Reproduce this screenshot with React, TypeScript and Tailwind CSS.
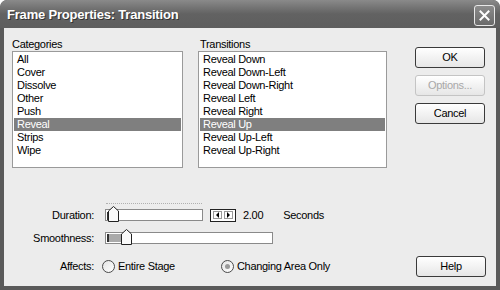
import React from "react";

const categories = ["All", "Cover", "Dissolve", "Other", "Push", "Reveal", "Strips", "Wipe"];
const transitions = [
  "Reveal Down",
  "Reveal Down-Left",
  "Reveal Down-Right",
  "Reveal Left",
  "Reveal Right",
  "Reveal Up",
  "Reveal Up-Left",
  "Reveal Up-Right",
];

const ListBox = ({ items, selected, width }: { items: string[]; selected: string; width: string }) => (
  <div className={`${width} h-[117px] border border-[#9a9a9a] bg-white pt-px`}>
    {items.map((item) => (
      <div
        key={item}
        className={`h-[13px] leading-[13px] pl-[3px] mx-px ${
          item === selected ? "bg-[#7f7f7f] text-white" : "text-black"
        }`}
      >
        {item}
      </div>
    ))}
  </div>
);

const Button = ({ label, disabled }: { label: string; disabled?: boolean }) => (
  <div
    className={`w-[70px] h-[21px] rounded-[3px] border flex items-center justify-center bg-gradient-to-b from-white to-[#e6e6e6] ${
      disabled ? "border-[#c4c4c4] text-[#a8a8a8]" : "border-[#3a3a3a] text-black"
    }`}
  >
    {label}
  </div>
);

const Thumb = () => (
  <svg width="11" height="16" viewBox="0 0 11 16" className="absolute top-[-4px]">
    <path d="M0.5 15.5 V5 L5.5 0.5 L10.5 5 V15.5 Z" fill="#fafafa" stroke="#222" />
  </svg>
);

const Radio = ({ checked }: { checked?: boolean }) => (
  <div className="w-[13px] h-[13px] rounded-full border border-[#4a4a4a] bg-gradient-to-br from-[#e4e4e4] to-white flex items-center justify-center">
    {checked && <div className="w-[5px] h-[5px] rounded-full bg-[#9a9a9a]" />}
  </div>
);

export default function App() {
  return (
    <div className="w-[500px] h-[290px] bg-[#5a5a5a] rounded-t-[7px] flex flex-col font-['Liberation_Sans',Arial,sans-serif] text-[11px] tracking-[-0.3px] text-black overflow-hidden">
      {/* title bar */}
      <div className="h-[28px] flex items-center justify-between pl-[7px] pr-[5px] bg-gradient-to-b from-[#8a8a8a] via-[#626262] to-[#5e5e5e] rounded-t-[7px]">
        <span className="text-white font-bold text-[13px] tracking-[-0.2px] [text-shadow:1px_1px_0_#333] pt-[1px]">
          Frame Properties: Transition
        </span>
        <div className="w-[21px] h-[21px] rounded-[3px] border border-[#e8e8e8] bg-gradient-to-b from-[#8c8c8c] to-[#6a6a6a] flex items-center justify-center mt-[2px]">
          <svg width="11" height="11" viewBox="0 0 11 11">
            <path d="M1.5 1.5 L9.5 9.5 M9.5 1.5 L1.5 9.5" stroke="white" strokeWidth="2" strokeLinecap="square" />
          </svg>
        </div>
      </div>

      {/* body */}
      <div className="flex-1 mx-[4px] mb-[4px] bg-[#ececec] flex flex-col">
        <div className="flex pl-[8px] pt-[9px]">
          <div className="flex flex-col">
            <div className="h-[14px] leading-[14px]">Categories</div>
            <ListBox items={categories} selected="Reveal" width="w-[171px]" />
          </div>
          <div className="flex flex-col ml-[15px]">
            <div className="h-[14px] leading-[14px] pl-[2px]">Transitions</div>
            <ListBox items={transitions} selected="Reveal Up" width="w-[189px]" />
          </div>
          <div className="flex flex-col gap-[7px] ml-[28px] pt-[10px]">
            <Button label="OK" />
            <Button label="Options..." disabled />
            <Button label="Cancel" />
          </div>
        </div>

        {/* lower controls */}
        <div className="flex mt-[41px]">
          <div className="flex flex-col">
            {/* duration */}
            <div className="flex items-center h-[12px]">
              <div className="w-[90px] text-right">Duration:</div>
              <div className="relative ml-[11px] w-[98px] h-[12px] border border-[#8a8a8a] bg-white">
                <div className="absolute left-px top-[2px] w-[2px] h-[8px] bg-[#333]" />
                <div className="absolute left-0 top-[-7px] w-[96px] border-t border-dotted border-[#b0b0b0]" />
                <div className="absolute left-[2px]">
                  <Thumb />
                </div>
              </div>
              <div className="ml-[7px] w-[26px] h-[13px] border-[1.5px] border-[#222] bg-white flex items-center justify-center gap-[2px]">
                <div className="w-[9px] h-[8px] border border-[#999] flex items-center justify-center">
                  <div className="w-0 h-0 border-y-[3px] border-y-transparent border-r-[3px] border-r-black" />
                </div>
                <div className="w-[9px] h-[8px] border border-[#999] flex items-center justify-center">
                  <div className="w-0 h-0 border-y-[3px] border-y-transparent border-l-[3px] border-l-black" />
                </div>
              </div>
              <span className="ml-[7px]">2.00</span>
              <span className="ml-[20px]">Seconds</span>
            </div>

            {/* smoothness */}
            <div className="flex items-center h-[12px] mt-[11px]">
              <div className="w-[90px] text-right">Smoothness:</div>
              <div className="relative ml-[11px] w-[168px] h-[12px] border border-[#8a8a8a] bg-white">
                <div className="absolute left-px top-px w-[2px] h-[8px] bg-[#333]" />
                <div className="absolute left-[3px] top-px w-[14px] h-[8px] bg-[#aaaaaa]" />
                <div className="absolute left-[15px]">
                  <Thumb />
                </div>
              </div>
            </div>

            {/* affects */}
            <div className="flex items-center mt-[14px]">
              <div className="w-[90px] text-right">Affects:</div>
              <div className="ml-[8px] flex items-center gap-[3px]">
                <Radio />
                <span>Entire Stage</span>
              </div>
              <div className="ml-[46px] flex items-center gap-[3px]">
                <Radio checked />
                <span>Changing Area Only</span>
              </div>
            </div>
          </div>
          <div className="ml-auto mr-[10px] mt-[47px]">
            <Button label="Help" />
          </div>
        </div>
      </div>
    </div>
  );
}
